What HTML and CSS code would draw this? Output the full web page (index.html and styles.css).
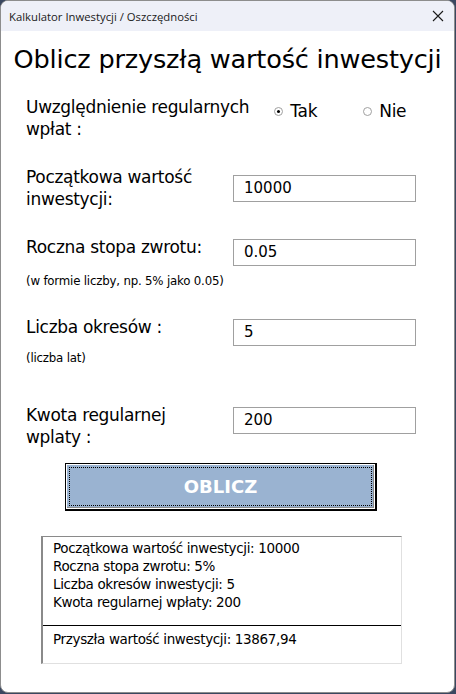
FILE: index.html
```html
<!DOCTYPE html>
<html lang="pl">
<head>
<meta charset="utf-8">
<title>Kalkulator Inwestycji / Oszczędności</title>
<link rel="stylesheet" href="styles.css">
</head>
<body>
<div class="window">
  <div class="titlebar">
    <span class="title">Kalkulator Inwestycji / Oszczędności</span>
    <svg class="close" width="12" height="12" viewBox="0 0 12 12"><path d="M1 1 L11 11 M11 1 L1 11" stroke="#1a1a1a" stroke-width="1.1" fill="none"/></svg>
  </div>
  <div class="content">
    <h1 class="heading">Oblicz przyszłą wartość inwestycji</h1>
    <div class="row row-radio">
      <div class="label">Uwzględnienie regularnych<br>wpłat :</div>
      <div class="radios">
        <label class="radio"><span class="dot checked"></span>Tak</label>
        <label class="radio"><span class="dot"></span>Nie</label>
      </div>
    </div>
    <div class="row row-start">
      <div class="label">Początkowa wartość<br>inwestycji:</div>
      <div class="input in-start">10000</div>
    </div>
    <div class="row row-rate">
      <div class="col">
        <div class="label">Roczna stopa zwrotu:</div>
        <div class="note note-rate">(w formie liczby, np. 5% jako 0.05)</div>
      </div>
      <div class="input">0.05</div>
    </div>
    <div class="row row-periods">
      <div class="col">
        <div class="label">Liczba okresów :</div>
        <div class="note note-periods">(liczba lat)</div>
      </div>
      <div class="input">5</div>
    </div>
    <div class="row row-amount">
      <div class="label">Kwota regularnej<br>wplaty :</div>
      <div class="input">200</div>
    </div>
    <div class="button-wrap">
      <div class="button"><span class="focus">OBLICZ</span></div>
    </div>
    <div class="output">
      <div class="line">Początkowa wartość inwestycji: 10000</div>
      <div class="line">Roczna stopa zwrotu: 5%</div>
      <div class="line">Liczba okresów inwestycji: 5</div>
      <div class="line">Kwota regularnej wpłaty: 200</div>
      <div class="sep"></div>
      <div class="line">Przyszła wartość inwestycji: 13867,94</div>
    </div>
  </div>
</div>
</body>
</html>
```
FILE: styles.css
```css
html, body {
  margin: 0;
  padding: 0;
}
body {
  width: 456px;
  height: 694px;
  background: #3a4760;
  overflow: hidden;
}
.window {
  width: 453px;
  height: 691px;
  background: #ffffff;
  border: 1px solid #8d8d8d;
  border-radius: 8px;
  overflow: hidden;
  font-family: "DejaVu Sans", "Liberation Sans", sans-serif;
  color: #000;
}
.titlebar {
  height: 30px;
  background: #eef0f8;
  display: flex;
  align-items: center;
  justify-content: space-between;
  padding: 0 10px 0 8px;
}
.title {
  font-family: "Open Sans", "Noto Sans", sans-serif;
  font-size: 11.3px;
  color: #1a1a1a;
}
.close {
  display: block;
}
.content {
  padding: 0 0 0 25px;
}
.heading {
  margin: 10px 0 0 -25px;
  font-size: 25.6px;
  font-weight: normal;
  text-align: center;
  line-height: 36px;
  letter-spacing: -0.2px;
  white-space: nowrap;
}
.row {
  display: flex;
  align-items: flex-start;
}
.label {
  font-size: 17px;
  line-height: 22px;
  letter-spacing: -0.3px;
  white-space: nowrap;
}
.row-radio { margin-top: 19px; height: 70px; }
.row-start { height: 70px; }
.row-rate { height: 80px; }
.row-periods { height: 88px; }
.row-amount { height: 59px; }
.row-start .label, .row-amount .label, .row .col { width: 207px; }
.radios {
  display: flex;
  margin-left: 25px;
  margin-top: 4px;
}
.radio {
  display: flex;
  align-items: center;
  font-size: 17px;
  letter-spacing: -0.3px;
  line-height: 22px;
}
.radio + .radio { margin-left: 46px; }
.dot {
  width: 7px;
  height: 7px;
  border: 1px solid #a0a0a0;
  border-radius: 50%;
  margin-right: 7px;
  position: relative;
  background: #fff;
}
.dot.checked::after {
  content: "";
  position: absolute;
  left: 2px;
  top: 2px;
  width: 3px;
  height: 3px;
  border-radius: 50%;
  background: #000;
}
.input {
  box-sizing: border-box;
  width: 183px;
  height: 27px;
  border: 1px solid #a0a0a0;
  font-size: 15px;
  line-height: 25px;
  padding-left: 10px;
  margin-top: 3px;
}
.in-start { margin-top: 9px; }
.note {
  font-size: 11.8px;
  line-height: 16px;
  letter-spacing: -0.2px;
  white-space: nowrap;
}
.note-rate { margin-top: 15px; }
.note-periods { margin-top: 12px; }
.button-wrap {
  padding-left: 39px;
}
.button {
  box-sizing: border-box;
  width: 312px;
  height: 48px;
  border: 1px solid #000;
  border-right-width: 2px;
  border-bottom-width: 2px;
  background: #9ab3d1;
  box-shadow: inset 1px 1px 0 #fff, inset -1px -1px 0 #fff, inset -2px -2px 0 #8a8a8a;
  padding: 3px;
}
.focus {
  box-sizing: border-box;
  display: flex;
  align-items: center;
  justify-content: center;
  height: 100%;
  border: 1px dotted #000;
  color: #fff;
  font-weight: bold;
  font-size: 18px;
}
.output {
  box-sizing: border-box;
  width: 361px;
  height: 128px;
  margin: 25px 0 0 15px;
  border-top: 1px solid #8a8a8a;
  border-left: 2px solid #8a8a8a;
  border-right: 1px solid #e0e0e0;
  border-bottom: 1px solid #e0e0e0;
  padding-top: 2px;
}
.line {
  font-size: 13.5px;
  line-height: 18px;
  padding-left: 10px;
  letter-spacing: -0.35px;
  white-space: nowrap;
}
.sep {
  height: 1px;
  background: #000;
  margin: 14px 0 4px 0;
}
```
